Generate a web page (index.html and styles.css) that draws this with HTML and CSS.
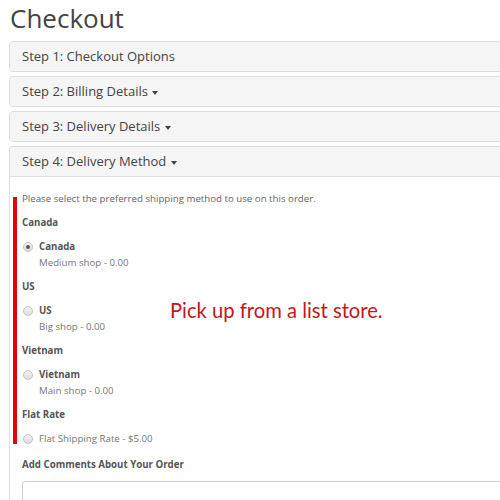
FILE: index.html
```html
<!DOCTYPE html>
<html lang="en">
<head>
    <meta charset="UTF-8">
    <meta name="viewport" content="width=device-width, initial-scale=1.0">
    <title>Checkout</title>
    <link rel="stylesheet" href="styles.css">
</head>
<body>
    <div class="page">
        <h1>Checkout</h1>
        <div class="panel-group">
            <div class="panel">
                <div class="panel-heading">Step 1: Checkout Options</div>
            </div>
            <div class="panel">
                <div class="panel-heading">Step 2: Billing Details <span class="caret"></span></div>
            </div>
            <div class="panel">
                <div class="panel-heading">Step 3: Delivery Details <span class="caret"></span></div>
            </div>
            <div class="panel panel-open">
                <div class="panel-heading">Step 4: Delivery Method <span class="caret"></span></div>
                <div class="panel-body">
                    <span class="mark-bar"></span>
                    <span class="mark-note">Pick up from a list store.</span>
                    <p class="intro">Please select the preferred shipping method to use on this order.</p>

                    <p class="group-title">Canada</p>
                    <label class="option">
                        <span class="radio checked"></span>
                        <span class="option-text">
                            <b>Canada</b>
                            <span class="desc">Medium shop - 0.00</span>
                        </span>
                    </label>

                    <p class="group-title">US</p>
                    <label class="option">
                        <span class="radio"></span>
                        <span class="option-text">
                            <b>US</b>
                            <span class="desc">Big shop - 0.00</span>
                        </span>
                    </label>

                    <p class="group-title">Vietnam</p>
                    <label class="option">
                        <span class="radio"></span>
                        <span class="option-text">
                            <b>Vietnam</b>
                            <span class="desc">Main shop - 0.00</span>
                        </span>
                    </label>

                    <p class="group-title">Flat Rate</p>
                    <label class="option">
                        <span class="radio"></span>
                        <span class="option-text">
                            <span class="desc">Flat Shipping Rate - $5.00</span>
                        </span>
                    </label>

                    <p class="comments-title">Add Comments About Your Order</p>
                    <textarea class="comments" rows="4"></textarea>
                </div>
            </div>
        </div>
    </div>
</body>
</html>
```

FILE: styles.css
```css
body {
    font-family: "Open Sans", sans-serif;
    margin: 0;
    padding: 0;
    background-color: #fff;
    color: #666;
    overflow: hidden;
}
.page {
    width: 620px;
    padding-left: 9px;
}
h1 {
    margin: 0;
    font-size: 26px;
    font-weight: normal;
    line-height: 36px;
    color: #444;
    padding-left: 1px;
}
.panel-group {
    margin-top: 5px;
}
.panel {
    border: 1px solid #ddd;
    border-radius: 4px;
    margin-bottom: 4px;
    background-color: #fff;
}
.panel-open {
    border-bottom: none;
    border-radius: 4px 4px 0 0;
}
.panel-heading {
    background-color: #f5f5f5;
    color: #444;
    font-size: 13px;
    height: 29px;
    line-height: 29px;
    padding: 0 12px;
    border-radius: 3px;
}
.panel-open .panel-heading {
    border-bottom: 1px solid #ddd;
    border-radius: 3px 3px 0 0;
}
.caret {
    display: inline-block;
    width: 0;
    height: 0;
    border-top: 4px solid #444;
    border-left: 3.5px solid transparent;
    border-right: 3.5px solid transparent;
    vertical-align: middle;
    margin-left: 1px;
}
.panel-body {
    position: relative;
    padding: 14px 12px 20px;
    font-size: 9.7px;
    line-height: 16px;
}
.mark-bar {
    position: absolute;
    left: 3px;
    top: 20px;
    width: 4px;
    height: 247px;
    background-color: #e3000f;
}
.mark-note {
    position: absolute;
    left: 160px;
    top: 120px;
    font-size: 20.2px;
    line-height: 26px;
    color: #c4161c;
    font-family: Lato, "Open Sans", sans-serif;
}
.intro {
    margin: 0;
    color: #666;
}
.group-title, .comments-title {
    margin: 8px 0 0;
    font-weight: bold;
    color: #555;
}
.comments-title {
    margin-top: 10px;
}
.option {
    display: flex;
    align-items: flex-start;
    margin-top: 8px;
}
.option b {
    display: block;
    color: #555;
}
.desc {
    display: block;
    color: #777;
}
.radio {
    width: 8px;
    height: 8px;
    margin: 3px 6px 0 1px;
    border: 1px solid #c4c4c4;
    border-radius: 50%;
    background: linear-gradient(#f4f4f4, #dcdcdc);
    box-sizing: content-box;
    position: relative;
    flex-shrink: 0;
}
.radio.checked::after {
    content: "";
    position: absolute;
    left: 2px;
    top: 2px;
    width: 4px;
    height: 4px;
    border-radius: 50%;
    background-color: #555;
}
.comments {
    display: block;
    width: 560px;
    height: 60px;
    margin-top: 8px;
    border: 1px solid #ccc;
    border-radius: 3px;
    resize: none;
}
```
